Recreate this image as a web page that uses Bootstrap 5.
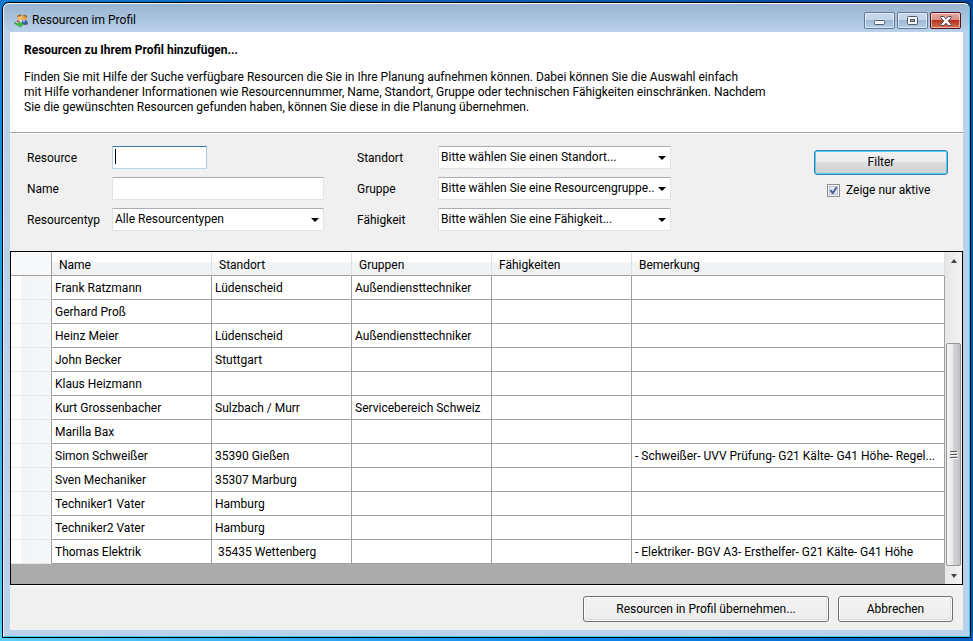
<!DOCTYPE html>
<html lang="de">
<head>
<meta charset="utf-8">
<meta name="viewport" content="width=device-width, initial-scale=1">
<title>Resourcen im Profil</title>
<link href="https://cdn.jsdelivr.net/npm/bootstrap@5.3.0/dist/css/bootstrap.min.css" rel="stylesheet">
<style>
  body {
    font-family: Roboto, "Open Sans", sans-serif; font-size: 12px; line-height: 15px; color: #000;
    padding: 2px 2px 3px;
    background:
      linear-gradient(90deg, #0f7ad0, #04479a) top / 100% 8px no-repeat,
      linear-gradient(90deg, #5cd0fb, #0b86ee 60%, #0560c4) bottom / 100% 8px no-repeat,
      linear-gradient(180deg, #1176d0, #1c9be4 40%, #52cdfb) left / 8px 100% no-repeat,
      #0455b4;
  }
  .dialog-window { border: 1px solid #000; border-radius: 7px 7px 0 0; background: #b9d1ea; overflow: hidden; }
  .dialog-frame { border: 1px solid #35cfe8; border-top-color: #fff; border-left-color: #e6f1fb; border-radius: 6px 6px 0 0; padding: 0 6px 6px; background: linear-gradient(180deg, #99b4d1, #b9d1ea 28px); }
  .title-bar { height: 28px; padding: 5px 2px 0 4px; }
  .caption-group { gap: 2px; }
  .caption-btn { width: 31px; height: 17px; border: 1px solid #64799a; border-radius: 2px; padding: 0; box-shadow: inset 0 0 0 1px #ffffff80; background: linear-gradient(180deg, #c3d6ea 0 50%, #9db8d4 50%, #b7cfe8); line-height: 0; }
  .caption-btn.caption-min { padding-top: 4px; }
  .caption-close { border-color: #54121f; background: linear-gradient(180deg, #e6a8a2, #d98d84 50%, #b8331f 50%, #d2714f); }
  .intro { padding: 11px 14px 16px; height: 101px; border-bottom: 1px solid #a0a0a0; }
  .intro h1 { font-size: 12px; line-height: 15px; margin-bottom: 12px; }
  .filters { background: #f0f0f0; border-top: 1px solid #fff; padding: 12px 15px 20px 17px; }
  .field-grid { display: grid; row-gap: 8px; grid-auto-rows: 23px; align-items: center; }
  .field-grid label { padding-top: 1px; }
  .grid-left { grid-template-columns: 85px 212px; margin-right: 33px; }
  .grid-right { grid-template-columns: 81px 233px; }
  .field { appearance: none; height: 23px; width: 100%; font: inherit; color: #000; background-color: #fff; border: 1px solid #e2e3ea; border-top-color: #abadb3; border-radius: 1px; padding: 0 2px; outline: 0; }
  .field-short { width: 95px; border-color: #3d7bad #a4c9e3 #b7d9ed #b5cfe7; caret-color: transparent; background-image: linear-gradient(#000, #000); background-repeat: no-repeat; background-size: 1px 15px; background-position: 2px 2px; }
  select.field { padding: 0 16px 0 2px; background-repeat: no-repeat; background-position: right 4px center; background-image: url("data:image/svg+xml,%3Csvg xmlns='http://www.w3.org/2000/svg' width='8' height='4'%3E%3Cpath d='M0 0h8L4 4z'/%3E%3C/svg%3E"); }
  .win-btn { font: inherit; color: #000; border: 1px solid #707070; border-radius: 3px; box-shadow: inset 0 0 0 1px #fcfcfc; background: linear-gradient(180deg, #f2f2f2, #ebebeb 50%, #dddddd 50%, #cfcfcf); height: 26px; padding: 0 8px; }
  .btn-default { width: 134px; height: 25px; border-color: #3c7fb1; box-shadow: inset 0 0 0 1px #48d0f5; }
  .btn-flat { background: linear-gradient(180deg, #f3f3f3, #ededed); box-shadow: inset 0 0 0 1px #fcfcfc, inset -2px -2px 0 #dcdcdc; }
  .btn-accept { width: 246px; }
  .btn-cancel { width: 115px; }
  .active-row { padding: 8px 0 0 13px; gap: 6px; }
  .active-check { appearance: none; width: 13px; height: 13px; margin: 0; border: 1px solid #8e8f8f; background: #e4e7ee; box-shadow: inset 0 0 0 1px #f4f4f4, inset 0 0 0 2px #c0c6d0; }
  .active-check:checked { background-image: url("data:image/svg+xml,%3Csvg xmlns='http://www.w3.org/2000/svg' viewBox='0 0 11 11'%3E%3Cpath d='M2.500 5.200l2.300 3L8.800 2' fill='none' stroke='%234a5f97' stroke-width='2'/%3E%3C/svg%3E"); }
  .grid-pane { background: #ababab; border: 1px solid #000; min-height: 0; }
  .data-grid { table-layout: fixed; width: 100%; border-collapse: separate; border-spacing: 0; background: #fff; }
  .data-grid th, .data-grid td { height: 24px; padding: 2px 3px 0; border: 0 solid #a0a0a0; border-width: 0 1px 1px 0; font-weight: 400; white-space: nowrap; overflow: hidden; text-overflow: ellipsis; }
  .data-grid thead th { padding: 4px 3px 0 7px; border-right-color: #dfe0e2; background: linear-gradient(180deg, #fff 0 45%, #f3f4f6 45%, #f0f1f3); }
  .data-grid thead td { background: #f7f8fa; }
  .data-grid tbody th { border-bottom-color: #e6e7ea; background: linear-gradient(90deg, #fff 0 25%, #f3f4f6 25%, #f6f7f9); }
  .data-grid td.indent { padding-left: 6px; }
  .col-handle { width: 41px; } .col-person { width: 160px; } .col-std { width: 140px; }
  .scroll-track { width: 17px; background: linear-gradient(90deg, #e6e6e6, #f4f4f4); }
  .scroll-track button { height: 17px; border: 0; padding: 0; background: none; line-height: 0; }
  .scroll-thumb { height: 223px; margin: 0 1px 1px; border: 1px solid #979797; border-radius: 2px; background: linear-gradient(90deg, #f5f5f5, #e9e9eb 45%, #d4d4d6 50%, #c0c0c4); }
  .footer-bar { background: #f0f0f0; border-top: 1px solid #fff; padding: 10px 10px 8px; gap: 9px; }
</style>
</head>
<body class="vh-100 d-flex flex-column overflow-hidden">
<main class="dialog-window d-flex flex-column flex-fill">
  <div class="dialog-frame d-flex flex-column flex-fill">
    <header class="title-bar d-flex align-items-center">
      <svg width="14" height="14" viewBox="0 0 14 14" aria-hidden="true">
        <path d="M8 7q3-2 5 0l1 3-3 1-3-1z" fill="#2b58a8"/>
        <path d="M3 6.500q2-1.500 5 0v3.500H3z" fill="#e9eef5"/><path d="M3.500 6l2 .5-.5 2-2.500-.5z" fill="#c9483a"/>
        <path d="M9 6.500h2L10 9z" fill="#fff"/>
        <circle cx="5.800" cy="3.800" r="2.500" fill="#f0bb6c"/><circle cx="10.500" cy="3.800" r="2.500" fill="#eaa54a"/>
        <path d="M3 3.500Q3 .5 6 .5q1.500 0 2 1.500-3-.5-5 1.500zM8.500 2q2-2.500 4.500 0v2.500Q12 2 8.500 2z" fill="#a86a1d"/>
        <path d="M11 10.500l1.500-1.500 1 2z" fill="#d8412f"/>
        <path d="M0 8l2.500 1.500L5.500 9V7.500L9.500 10l-3.500 3.500V12q-4 0-6-4z" fill="#3fc344" stroke="#17862a" stroke-width=".5"/>
      </svg>
      <span class="ms-1">Resourcen im Profil</span>
      <div class="d-flex ms-auto caption-group">
        <button class="caption-btn caption-min" type="button" aria-label="Minimieren"><svg width="11" height="5"><rect x=".5" y=".5" width="10" height="4" rx="1" fill="#f6f6f6" stroke="#51596b"/></svg></button>
        <button class="caption-btn" type="button" aria-label="Maximieren"><svg width="11" height="9"><rect x=".5" y=".5" width="10" height="8" rx="1" fill="#f6f6f6" stroke="#51596b"/><rect x="3.500" y="3.500" width="4" height="2" fill="#86a9cc" stroke="#51596b"/></svg></button>
        <button class="caption-btn caption-close" type="button" aria-label="Schließen"><svg width="12" height="10" viewBox="0 0 12 10"><path d="M.8.500h3L6 2.800 8.200.500h3v1.200L8.300 5l2.900 3.300v1.200h-3L6 7.200 3.800 9.500h-3V8.300L3.700 5 .8 1.700z" fill="#f8f8f8" stroke="#51495b"/></svg></button>
      </div>
    </header>
    <section class="intro bg-white">
      <h1 class="fw-bold">Resourcen zu Ihrem Profil hinzufügen...</h1>
      <p class="mb-0">Finden Sie mit Hilfe der Suche verfügbare Resourcen die Sie in Ihre Planung aufnehmen können. Dabei können Sie die Auswahl einfach<br>mit Hilfe vorhandener Informationen wie Resourcennummer, Name, Standort, Gruppe oder technischen Fähigkeiten einschränken. Nachdem<br>Sie die gewünschten Resourcen gefunden haben, können Sie diese in die Planung übernehmen.</p>
    </section>
    <form class="filters d-flex align-items-start">
      <div class="field-grid grid-left">
        <label for="resource">Resource</label><input class="field field-short" id="resource" type="text">
        <label for="name">Name</label><input class="field" id="name" type="text">
        <label for="type">Resourcentyp</label><select class="field" id="type"><option>Alle Resourcentypen</option></select>
      </div>
      <div class="field-grid grid-right">
        <label for="site">Standort</label><select class="field" id="site"><option>Bitte wählen Sie einen Standort...</option></select>
        <label for="group">Gruppe</label><select class="field" id="group"><option>Bitte wählen Sie eine Resourcengruppe..</option></select>
        <label for="skill">Fähigkeit</label><select class="field" id="skill"><option>Bitte wählen Sie eine Fähigkeit...</option></select>
      </div>
      <div class="ms-auto pt-1">
        <button class="win-btn btn-default" type="button">Filter</button>
        <div class="d-flex align-items-center active-row"><input class="active-check" id="active" type="checkbox" checked><label for="active">Zeige nur aktive</label></div>
      </div>
    </form>
    <section class="grid-pane d-flex flex-fill">
      <div class="flex-fill overflow-hidden">
        <table class="data-grid">
          <colgroup><col class="col-handle"><col class="col-person"><col class="col-std"><col class="col-std"><col class="col-std"><col></colgroup>
          <thead><tr><td></td><th scope="col">Name</th><th scope="col">Standort</th><th scope="col">Gruppen</th><th scope="col">Fähigkeiten</th><th scope="col">Bemerkung</th></tr></thead>
          <tbody>
            <tr><th></th><td>Frank Ratzmann</td><td>Lüdenscheid</td><td>Außendiensttechniker</td><td></td><td></td></tr>
            <tr><th></th><td>Gerhard Proß</td><td></td><td></td><td></td><td></td></tr>
            <tr><th></th><td>Heinz Meier</td><td>Lüdenscheid</td><td>Außendiensttechniker</td><td></td><td></td></tr>
            <tr><th></th><td>John Becker</td><td>Stuttgart</td><td></td><td></td><td></td></tr>
            <tr><th></th><td>Klaus Heizmann</td><td></td><td></td><td></td><td></td></tr>
            <tr><th></th><td>Kurt Grossenbacher</td><td>Sulzbach / Murr</td><td>Servicebereich Schweiz</td><td></td><td></td></tr>
            <tr><th></th><td>Marilla Bax</td><td></td><td></td><td></td><td></td></tr>
            <tr><th></th><td>Simon Schweißer</td><td>35390 Gießen</td><td></td><td></td><td>- Schweißer- UVV Prüfung- G21 Kälte- G41 Höhe- Regel...</td></tr>
            <tr><th></th><td>Sven Mechaniker</td><td>35307 Marburg</td><td></td><td></td><td></td></tr>
            <tr><th></th><td>Techniker1 Vater</td><td>Hamburg</td><td></td><td></td><td></td></tr>
            <tr><th></th><td>Techniker2 Vater</td><td>Hamburg</td><td></td><td></td><td></td></tr>
            <tr><th></th><td>Thomas Elektrik</td><td class="indent">35435 Wettenberg</td><td></td><td></td><td>- Elektriker- BGV A3- Ersthelfer- G21 Kälte- G41 Höhe</td></tr>
          </tbody>
        </table>
      </div>
      <div class="scroll-track d-flex flex-column flex-shrink-0">
        <button type="button" aria-label="Nach oben"><svg width="6" height="4"><path d="M0 4L3 0l3 4z" fill="#444"/></svg></button>
        <div class="scroll-thumb d-flex align-items-center justify-content-center mt-auto"><svg width="8" height="8"><path d="M0 .5h7M0 3.500h7M0 6.500h7" stroke="#555"/><path d="M1 1.500h7M1 4.500h7M1 7.500h7" stroke="#fafafa"/></svg></div>
        <button type="button" aria-label="Nach unten"><svg width="6" height="4"><path d="M0 0h6L3 4z" fill="#444"/></svg></button>
      </div>
    </section>
    <footer class="footer-bar d-flex justify-content-end">
      <button class="win-btn btn-flat btn-accept" type="button">Resourcen in Profil übernehmen...</button>
      <button class="win-btn btn-flat btn-cancel" type="button">Abbrechen</button>
    </footer>
  </div>
</main>
<script src="https://cdn.jsdelivr.net/npm/bootstrap@5.3.0/dist/js/bootstrap.bundle.min.js"></script>
</body>
</html>
